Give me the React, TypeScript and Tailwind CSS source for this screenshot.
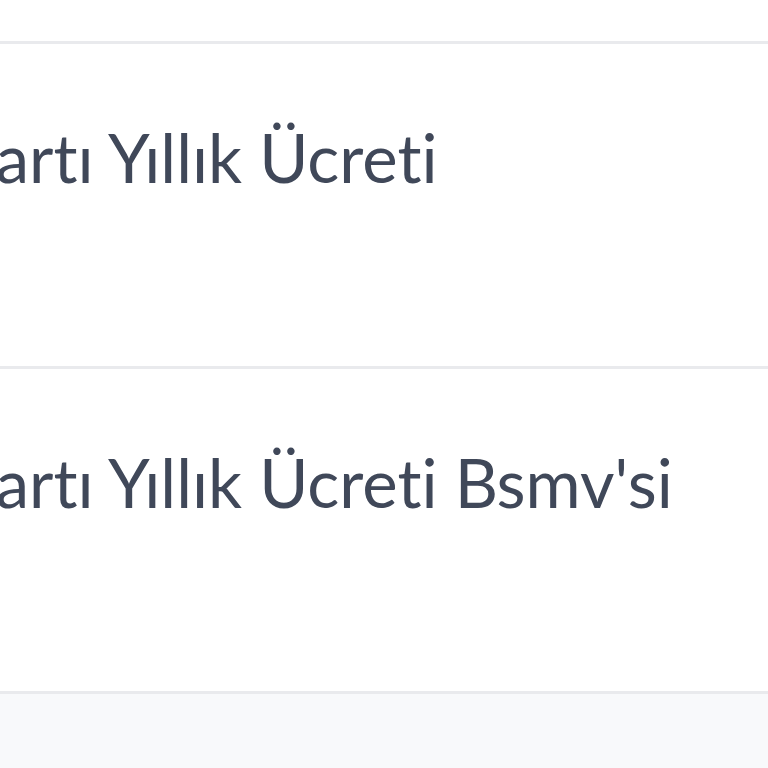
import React from 'react';

const rows = [
    'Kredi Kartı Yıllık Ücreti',
    "Kredi Kartı Yıllık Ücreti Bsmv'si",
];

const App = () => {
    return (
        <div className="w-[768px] h-[768px] overflow-hidden bg-[#f8f9fb]" style={{ fontFamily: 'Lato, "Noto Sans", sans-serif' }}>
            <div className="h-[44px] bg-white border-b-[3px] border-[#e9eaed]"></div>
            {rows.map((label) => (
                <div key={label} className="h-[325px] bg-white border-b-[3px] border-[#e9eaed] pt-[80px] overflow-hidden">
                    <div className="ml-[-222px] whitespace-nowrap text-[67px] leading-none text-[#404859] [font-variant-ligatures:none]">{label}</div>
                </div>
            ))}
        </div>
    );
};

export default App;
